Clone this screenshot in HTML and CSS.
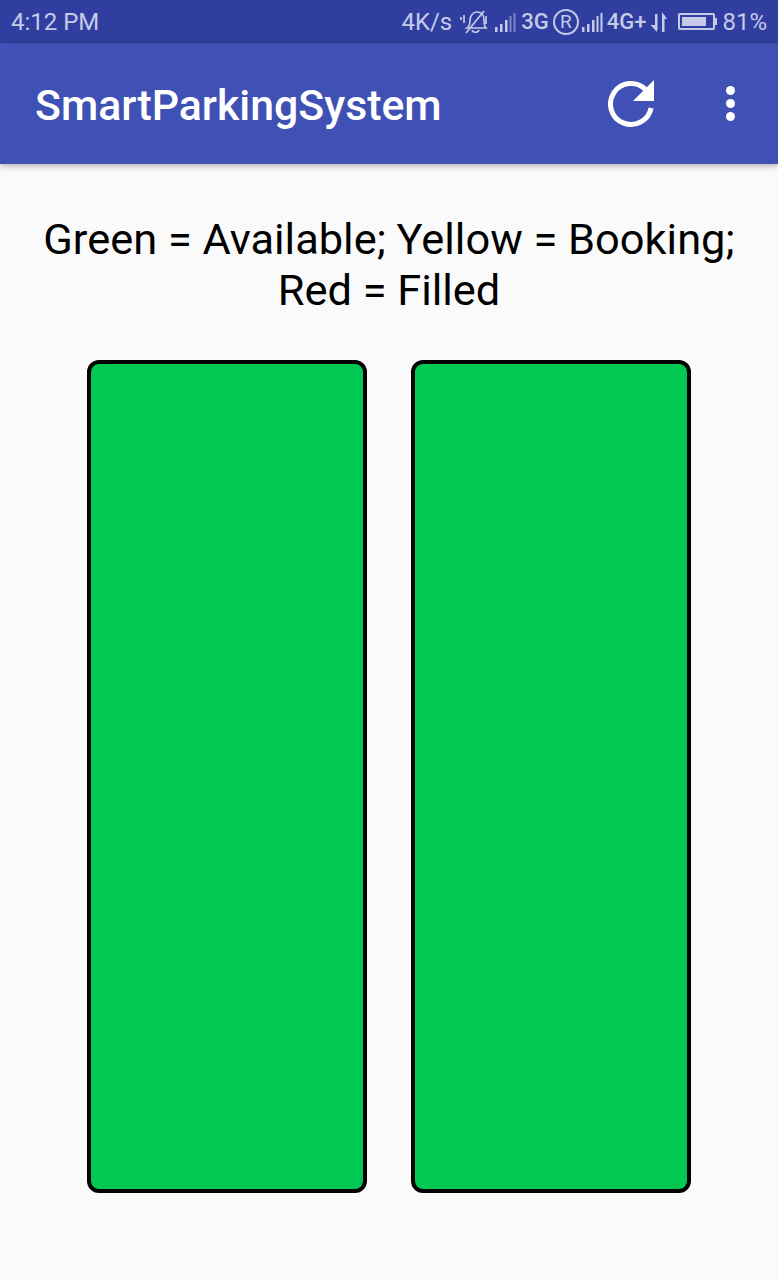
FILE: index.html
```html
<!DOCTYPE html>
<html lang="en">
<head>
  <meta charset="UTF-8">
  <meta name="viewport" content="width=device-width, initial-scale=1.0">
  <title>SmartParkingSystem</title>
  <link rel="stylesheet" href="styles.css">
</head>
<body>
  <div class="status-bar">
    <span class="status-time">4:12 PM</span>
    <div class="status-right">
      <span class="net-speed">4K/s</span>
      <svg class="icon-bell" width="30" height="24" viewBox="0 0 30 24" fill="none" stroke="#c5cae9" stroke-width="1.7">
        <path d="M1 7v3M4 5v8M26 6v8"/>
        <path d="M7 18c3-2 3-5 3-8 0-4 3-8 7-8s7 3 7 8c0 3 0 6 2 8z"/>
        <path d="M12 20c1 3 6 3 7 0"/>
        <path d="M6 23L24 1"/>
      </svg>
      <svg class="icon-signal" width="22" height="24" viewBox="0 0 22 24" fill="#c5cae9">
        <rect x="1" y="17" width="2.5" height="5"/>
        <rect x="6" y="14" width="2.5" height="8"/>
        <rect x="11" y="10" width="2.5" height="12"/>
        <rect x="15.5" y="6" width="2" height="16" opacity="0.5"/>
        <rect x="19.5" y="3" width="2" height="19" opacity="0.5"/>
      </svg>
      <span class="net-type">3G</span>
      <span class="roaming">R</span>
      <svg class="icon-signal-full" width="22" height="24" viewBox="0 0 22 24" fill="#c5cae9">
        <rect x="1" y="17" width="2.5" height="5"/>
        <rect x="6" y="14" width="2.5" height="8"/>
        <rect x="11" y="10" width="2.5" height="12"/>
        <rect x="15.5" y="6" width="2" height="16"/>
        <rect x="19.5" y="3" width="2" height="19"/>
      </svg>
      <span class="net-type">4G+</span>
      <svg class="icon-arrows" width="18" height="24" viewBox="0 0 18 24" fill="#c5cae9">
        <path d="M5 4h2.5v16H5z"/>
        <path d="M0.5 15l6.5 7v-7z"/>
        <path d="M12 5h2.500v17H12z"/>
        <path d="M12 2v7h5z"/>
      </svg>
      <div class="battery"><div class="battery-level"></div></div>
      <div class="battery-tip"></div>
      <span class="battery-pct">81%</span>
    </div>
  </div>

  <header class="app-bar">
    <h1 class="app-title">SmartParkingSystem</h1>
    <svg class="icon-refresh" width="48" height="48" viewBox="0 0 48 48" fill="none">
      <path d="M37.500 9.500A20.500 20.500 0 1 0 43.100 28" stroke="#fff" stroke-width="5"/>
      <path d="M46 0v21H25z" fill="#fff"/>
    </svg>
    <div class="overflow-menu">
      <span class="dot"></span>
      <span class="dot"></span>
      <span class="dot"></span>
    </div>
  </header>

  <main class="content">
    <p class="legend">Green = Available; Yellow = Booking; Red = Filled</p>
    <div class="slots">
      <div class="slot"></div>
      <div class="slot"></div>
    </div>
  </main>
</body>
</html>
```

FILE: styles.css
```css
body {
  margin: 0;
  height: 1280px;
  overflow: hidden;
  font-family: Roboto, sans-serif;
  background-color: #fafafa;
}
.status-bar {
  height: 43px;
  box-sizing: border-box;
  padding: 0 11px;
  display: flex;
  align-items: center;
  justify-content: space-between;
  background-color: #303f9f;
  color: #c5cae9;
  font-size: 24px;
}
.status-right {
  display: flex;
  align-items: center;
}
.net-speed {
  margin-right: 8px;
}
.icon-signal {
  margin: 0 5px 0 4px;
}
.net-type {
  font-weight: 500;
  font-size: 22px;
}
.roaming {
  width: 26px;
  height: 26px;
  margin: 0 2px 0 4px;
  box-sizing: border-box;
  border: 2px solid #c5cae9;
  border-radius: 50%;
  display: flex;
  align-items: center;
  justify-content: center;
  font-size: 19px;
}
.icon-signal-full {
  margin-right: 4px;
}
.icon-arrows {
  margin: 0 10px 0 4px;
}
.battery {
  width: 37px;
  height: 17px;
  box-sizing: border-box;
  padding: 2px;
  border: 2px solid #c5cae9;
  border-radius: 2px;
}
.battery-level {
  width: 81%;
  height: 100%;
  background-color: #c5cae9;
}
.battery-tip {
  width: 2px;
  height: 7px;
  margin-right: 5px;
  background-color: #c5cae9;
}
.app-bar {
  height: 121px;
  box-sizing: border-box;
  padding: 0 43px 0 35px;
  display: flex;
  align-items: center;
  background-color: #3f51b5;
  box-shadow: 0 2px 6px rgba(0, 0, 0, 0.3);
  position: relative;
}
.app-title {
  flex: 1;
  margin: 3px 0 0;
  font-size: 42.800px;
  font-weight: 500;
  color: #fff;
}
.icon-refresh {
  margin-right: 70px;
}
.overflow-menu {
  display: flex;
  flex-direction: column;
  gap: 4px;
}
.dot {
  width: 9px;
  height: 9px;
  border-radius: 50%;
  background-color: #fff;
}
.content {
  padding-top: 50px;
}
.legend {
  margin: 0 0 44px;
  padding: 0 30px;
  text-align: center;
  font-size: 43.400px;
  line-height: 51px;
  color: #000;
}
.slots {
  display: flex;
  justify-content: center;
  gap: 44px;
}
.slot {
  width: 280px;
  height: 833px;
  box-sizing: border-box;
  border: 4px solid #000;
  border-radius: 12px;
  background-color: #00c853;
}
```
